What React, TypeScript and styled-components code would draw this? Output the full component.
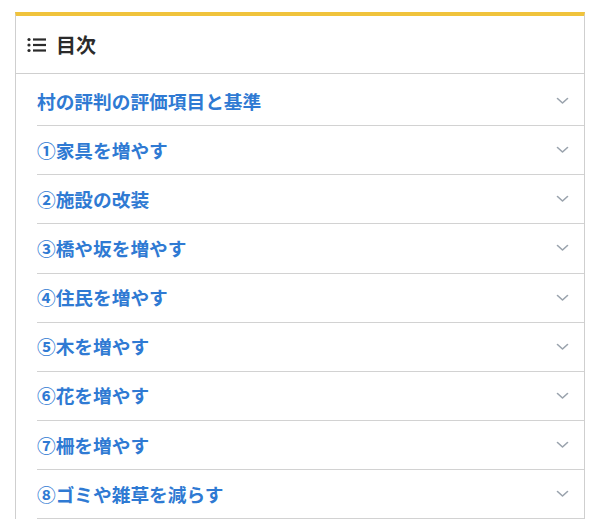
import styled, { createGlobalStyle } from 'styled-components';

const GlobalStyle = createGlobalStyle`
  html, body {
    margin: 0;
    padding: 0;
    background: #ffffff;
  }
  body {
    font-family: 'Noto Sans CJK JP', 'Noto Sans', sans-serif;
  }
`;

const items = [
  '村の評判の評価項目と基準',
  '①家具を増やす',
  '②施設の改装',
  '③橋や坂を増やす',
  '④住民を増やす',
  '⑤木を増やす',
  '⑥花を増やす',
  '⑦柵を増やす',
  '⑧ゴミや雑草を減らす',
];

const Page = styled.div`
  padding: 12px 15px 0 15px;
`;

const Card = styled.section`
  width: 570px;
  box-sizing: border-box;
  border: 1px solid #cfcfcf;
  border-top: 4px solid #f0c33c;
  border-bottom: none;
  background: #ffffff;
`;

const Head = styled.div`
  display: flex;
  align-items: center;
  gap: 9px;
  height: 57px;
  padding: 0 11px;
  border-bottom: 1px solid #cfcfcf;
`;

const Title = styled.h2`
  margin: 0;
  font-size: 20px;
  font-weight: 700;
  color: #2b2b2b;
  line-height: 1;
`;

const List = styled.ul`
  list-style: none;
  margin: 0;
  padding: 3px 0 0 21px;
`;

const Item = styled.li`
  display: flex;
  align-items: center;
  justify-content: space-between;
  height: 48.125px;
  padding-right: 15px;
  border-bottom: 1px solid #d2d2d2;
`;

const Label = styled.a`
  font-size: 18.7px;
  font-weight: 700;
  color: #2f7ad3;
  text-decoration: none;
  line-height: 1;
`;

const Chevron = () => (
  <svg width="13" height="8" viewBox="0 0 13 8" fill="none">
    <path d="M1.5 1.5 L6.5 6 L11.5 1.5" stroke="#9aa3ad" strokeWidth="1.6" strokeLinecap="round" strokeLinejoin="round" />
  </svg>
);

const ListIcon = () => (
  <svg width="20" height="16" viewBox="0 0 20 16" fill="#2b2b2b">
    <circle cx="2" cy="2.5" r="1.6" />
    <circle cx="2" cy="8" r="1.6" />
    <circle cx="2" cy="13.5" r="1.6" />
    <rect x="6" y="1.4" width="13" height="2.2" />
    <rect x="6" y="6.9" width="13" height="2.2" />
    <rect x="6" y="12.4" width="13" height="2.2" />
  </svg>
);

export default function App() {
  return (
    <Page>
      <GlobalStyle />
      <Card>
        <Head>
          <ListIcon />
          <Title>目次</Title>
        </Head>
        <List>
          {items.map((t) => (
            <Item key={t}>
              <Label href="#">{t}</Label>
              <Chevron />
            </Item>
          ))}
        </List>
      </Card>
    </Page>
  );
}
